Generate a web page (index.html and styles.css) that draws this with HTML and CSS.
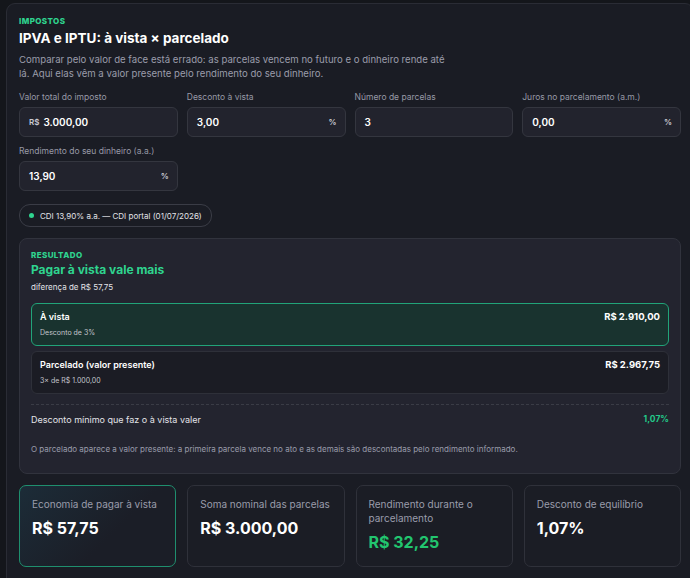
FILE: index.html
```html
<!DOCTYPE html>
<html lang="pt-BR">
<head>
    <meta charset="UTF-8">
    <meta name="viewport" content="width=device-width, initial-scale=1.0">
    <title>IPVA e IPTU: à vista × parcelado</title>
    <link rel="stylesheet" href="styles.css">
</head>
<body>
    <div class="calc">
        <div class="eyebrow">Impostos</div>
        <h1>IPVA e IPTU: à vista × parcelado</h1>
        <p class="lead">Comparar pelo valor de face está errado: as parcelas vencem no futuro e o dinheiro rende até lá. Aqui elas vêm a valor presente pelo rendimento do seu dinheiro.</p>

        <!-- campos de entrada -->
        <div class="fields">
            <label class="field">
                <span class="field-label">Valor total do imposto</span>
                <span class="input"><span class="prefix">R$</span><span class="val">3.000,00</span></span>
            </label>
            <label class="field">
                <span class="field-label">Desconto à vista</span>
                <span class="input"><span class="val">3,00</span><span class="suffix">%</span></span>
            </label>
            <label class="field">
                <span class="field-label">Número de parcelas</span>
                <span class="input"><span class="val">3</span></span>
            </label>
            <label class="field">
                <span class="field-label">Juros no parcelamento (a.m.)</span>
                <span class="input"><span class="val">0,00</span><span class="suffix">%</span></span>
            </label>
            <label class="field">
                <span class="field-label">Rendimento do seu dinheiro (a.a.)</span>
                <span class="input"><span class="val">13,90</span><span class="suffix">%</span></span>
            </label>
        </div>

        <div class="chip"><span class="dot"></span>CDI 13,90% a.a. — CDI portal (01/07/2026)</div>

        <!-- resultado -->
        <div class="result">
            <div class="eyebrow">Resultado</div>
            <div class="verdict">Pagar à vista vale mais</div>
            <div class="diff">diferença de R$ 57,75</div>

            <div class="option best">
                <div>
                    <div class="opt-title">À vista</div>
                    <div class="opt-sub">Desconto de 3%</div>
                </div>
                <div class="opt-value">R$ 2.910,00</div>
            </div>
            <div class="option">
                <div>
                    <div class="opt-title">Parcelado (valor presente)</div>
                    <div class="opt-sub">3× de R$ 1.000,00</div>
                </div>
                <div class="opt-value">R$ 2.967,75</div>
            </div>

            <div class="breakeven">
                <span>Desconto mínimo que faz o à vista valer</span>
                <span class="green">1,07%</span>
            </div>
            <p class="note">O parcelado aparece a valor presente: a primeira parcela vence no ato e as demais são descontadas pelo rendimento informado.</p>
        </div>

        <!-- resumo -->
        <div class="stats">
            <div class="stat highlight">
                <div class="stat-label">Economia de pagar à vista</div>
                <div class="stat-value mint">R$ 57,75</div>
            </div>
            <div class="stat">
                <div class="stat-label">Soma nominal das parcelas</div>
                <div class="stat-value">R$ 3.000,00</div>
            </div>
            <div class="stat">
                <div class="stat-label">Rendimento durante o parcelamento</div>
                <div class="stat-value green">R$ 32,25</div>
            </div>
            <div class="stat">
                <div class="stat-label">Desconto de equilíbrio</div>
                <div class="stat-value">1,07%</div>
            </div>
        </div>
    </div>
</body>
</html>
```

FILE: styles.css
```css
html, body {
    overflow: hidden;
}
body {
    margin: 0;
    padding: 3px 0 0 6px;
    background-color: #14161b;
    font-family: Inter, "Noto Sans", sans-serif;
    color: #e8e9ee;
}
.calc {
    width: 662px;
    padding: 12px 12px 20px 12px;
    background: #1a1c24;
    border: 1px solid #2a2c35;
    border-radius: 9px;
}
.eyebrow {
    font-size: 8px;
    font-weight: 800;
    letter-spacing: 0.4px;
    text-transform: uppercase;
    color: #2fd48f;
}
h1 {
    margin: 4px 0 0;
    font-size: 13.5px;
    font-weight: 700;
    color: #ffffff;
}
.lead {
    margin: 7px 0 0;
    max-width: 432px;
    font-size: 9.6px;
    line-height: 14px;
    color: #9a9cab;
}
.fields {
    display: grid;
    grid-template-columns: repeat(4, 1fr);
    column-gap: 9px;
    row-gap: 9px;
    margin-top: 11px;
}
.field {
    display: flex;
    flex-direction: column;
    gap: 5px;
}
.field-label {
    font-size: 8.5px;
    color: #9799a6;
}
.input {
    display: flex;
    align-items: center;
    height: 28px;
    padding: 0 8px 0 9px;
    background: #22232d;
    border: 1px solid #34363f;
    border-radius: 6px;
    font-size: 10px;
    font-weight: 600;
    color: #ffffff;
}
.prefix {
    font-size: 8px;
    margin-right: 4px;
    color: #c9cad2;
}
.val {
    flex: 1;
}
.suffix {
    font-size: 8px;
    color: #c9cad2;
}
.chip {
    display: inline-flex;
    align-items: center;
    gap: 6px;
    margin-top: 13px;
    padding: 0 9px;
    height: 21px;
    border: 1px solid #3a3c46;
    border-radius: 11px;
    font-size: 8px;
    color: #e2e3e8;
}
.dot {
    width: 5px;
    height: 5px;
    border-radius: 50%;
    background: #2fd48f;
}
.result {
    margin-top: 11px;
    padding: 11px 11px 19px 11px;
    background: #23242f;
    border: 1px solid #31333d;
    border-radius: 8px;
}
.verdict {
    margin-top: 2px;
    font-size: 12px;
    font-weight: 700;
    color: #2fd48f;
}
.diff {
    margin-top: 5px;
    font-size: 8px;
    color: #e2e3e8;
}
.option {
    display: flex;
    justify-content: space-between;
    align-items: flex-start;
    margin-top: 5px;
    padding: 7px 8px 8px 8px;
    background: #1b1c24;
    border: 1px solid #2e3039;
    border-radius: 6px;
}
.option.best {
    margin-top: 11px;
    background: #19332f;
    border-color: #21a479;
}
.opt-title {
    font-size: 9px;
    font-weight: 600;
    color: #ffffff;
}
.opt-sub {
    margin-top: 6px;
    font-size: 7px;
    color: #c3c5cc;
}
.opt-value {
    font-size: 9.5px;
    font-weight: 700;
    color: #ffffff;
}
.breakeven {
    display: flex;
    justify-content: space-between;
    margin-top: 10px;
    padding-top: 9px;
    border-top: 1px dashed #3a3c46;
    font-size: 9px;
    color: #e2e3e8;
}
.breakeven .green {
    font-weight: 700;
    font-size: 8.5px;
}
.green {
    color: #22c98a;
}
.mint {
    color: #33dd9a;
}
.note {
    margin: 19px 0 0;
    font-size: 8px;
    color: #9a9cab;
}
.stats {
    display: grid;
    grid-template-columns: repeat(4, 1fr);
    gap: 11px;
    margin-top: 11px;
}
.stat {
    height: 82px;
    box-sizing: border-box;
    padding: 11px 12px;
    background: #1b1d25;
    border: 1px solid #2f313a;
    border-radius: 7px;
}
.stat.highlight {
    background: linear-gradient(135deg, #1c2c38 0%, #1b1e27 60%);
    border-color: #1f8f6e;
}
.stat-label {
    font-size: 10px;
    line-height: 14px;
    color: #9a9cab;
}
.stat-value {
    margin-top: 7px;
    font-size: 16px;
    font-weight: 700;
    color: #ffffff;
}
.stat-value.green {
    color: #22c56f;
}
```
